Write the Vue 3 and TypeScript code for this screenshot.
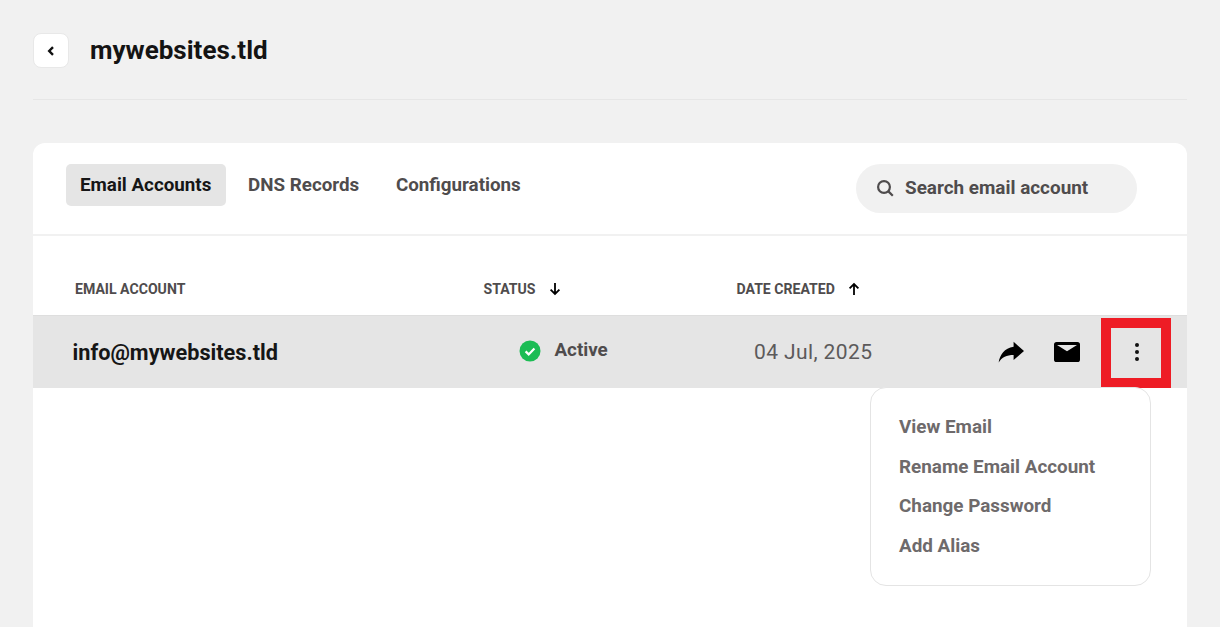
<script setup lang="ts">
const tabs = ["Email Accounts", "DNS Records", "Configurations"];
const menuItems = ["View Email", "Rename Email Account", "Change Password", "Add Alias"];
</script>

<template>
  <div class="page">
    <header class="head">
      <button class="back" type="button">
        <svg width="12" height="12" viewBox="0 0 12 12">
          <path d="M8 2.200 4.200 6 8 9.800" fill="none" stroke="#111" stroke-width="2.400" />
        </svg>
      </button>
      <h1 class="title">mywebsites.tld</h1>
    </header>

    <section class="card">
      <div class="toolbar">
        <nav class="tabs">
          <a
            v-for="(tab, index) of tabs"
            :key="tab"
            class="tab"
            :class="{ active: index === 0 }"
          >{{ tab }}</a>
        </nav>
        <div class="search">
          <svg width="18" height="18" viewBox="0 0 18 18">
            <circle cx="8" cy="8" r="5.900" fill="none" stroke="#4f4c4d" stroke-width="2.200" />
            <path d="M12.400 12.400 16.800 16.800" stroke="#4f4c4d" stroke-width="2.200" />
          </svg>
          <span>Search email account</span>
        </div>
      </div>

      <div class="table-head">
        <span class="th th-email">EMAIL ACCOUNT</span>
        <span class="th th-status">
          STATUS
          <svg width="14" height="14" viewBox="0 0 14 14">
            <path d="M7 1v11M2.600 7.600 7 12l4.400-4.400" fill="none" stroke="#000" stroke-width="1.800" />
          </svg>
        </span>
        <span class="th th-date">
          DATE CREATED
          <svg width="14" height="14" viewBox="0 0 14 14">
            <path d="M7 13V2M2.600 6.400 7 2l4.400 4.400" fill="none" stroke="#000" stroke-width="1.800" />
          </svg>
        </span>
      </div>

      <div class="row">
        <span class="email">info@mywebsites.tld</span>
        <span class="status">
          <svg width="22" height="22" viewBox="0 0 22 22">
            <circle cx="11" cy="11" r="10.500" fill="#1cbc54" />
            <path d="M6.600 11.400 9.700 14.400 15.400 8.400" fill="none" stroke="#fff" stroke-width="2.200" />
          </svg>
          <span class="status-text">Active</span>
        </span>
        <span class="date">04 Jul, 2025</span>
        <div class="actions">
          <svg class="forward" width="26" height="22" viewBox="0 0 24 20">
            <path d="M14.400 5.200V0.600L24 9l-9.600 8.400v-4.700C8 12.700 3.600 14.800 0.600 19.600 1.800 12.800 5.800 6.300 14.400 5.200z" fill="#000" />
          </svg>
          <svg class="mail" width="26" height="20" viewBox="0 0 26 20">
            <path d="M2.600 0h20.800A2.600 2.600 0 0 1 26 2.600v14.800a2.600 2.600 0 0 1-2.600 2.600H2.600A2.600 2.600 0 0 1 0 17.400V2.600A2.600 2.600 0 0 1 2.600 0zM3 3l10 6.300L23 3z" fill="#000" fill-rule="evenodd" />
          </svg>
          <span class="kebab"><i></i><i></i><i></i></span>
        </div>
        <div class="highlight"></div>
      </div>

      <ul class="menu">
        <li v-for="item of menuItems" :key="item">{{ item }}</li>
      </ul>
    </section>
  </div>
</template>

<style scoped>
.page {
  padding: 33px 33px 0;
  height: 627px;
  box-sizing: border-box;
  overflow: hidden;
  font-family: Roboto, "Liberation Sans", sans-serif;
}

.head {
  display: flex;
  align-items: flex-start;
  gap: 21px;
  height: 36px;
  padding-bottom: 30px;
  border-bottom: 1px solid #e6e6e6;
  margin-bottom: 43px;
}

.back {
  width: 36px;
  height: 35px;
  padding: 0;
  display: flex;
  align-items: center;
  justify-content: center;
  background: #fff;
  border: 1px solid #e8e8e8;
  border-radius: 8px;
}

.title {
  margin: 0;
  font-size: 26px;
  line-height: 35px;
  font-weight: 700;
  color: #141414;
}

.card {
  position: relative;
  background: #fff;
  border-radius: 12px 12px 0 0;
  height: 520px;
}

.toolbar {
  display: flex;
  justify-content: space-between;
  align-items: flex-start;
  height: 70px;
  padding: 21px 50px 0 33px;
  border-bottom: 2px solid #f1f1f1;
}

.tabs {
  display: flex;
  gap: 8.500px;
}

.tab {
  height: 42px;
  line-height: 42px;
  padding: 0 14.200px 0 14px;
  border-radius: 5px;
  font-size: 18.800px;
  font-weight: 700;
  color: #4f4c4d;
}

.tab.active {
  background: #e5e5e5;
  color: #161616;
}

.search {
  width: 281px;
  height: 49px;
  box-sizing: border-box;
  padding: 0 0 3px 20px;
  display: flex;
  align-items: center;
  gap: 11px;
  background: #f1f1f1;
  border-radius: 25px;
  font-size: 18.900px;
  font-weight: 700;
  color: #4f4c4d;
}

.search svg {
  margin-top: 1px;
}

.table-head {
  display: flex;
  align-items: center;
  height: 80px;
  box-sizing: border-box;
  padding-top: 27px;
  border-bottom: 1px solid #dedede;
}

.th {
  display: flex;
  align-items: center;
  gap: 12.500px;
  font-size: 14.100px;
  font-weight: 700;
  color: #4f4c4d;
}

.th-email {
  margin-left: 42px;
  width: 408.500px;
}

.th-status {
  width: 253px;
}

.row {
  position: relative;
  display: flex;
  align-items: center;
  height: 72px;
  background: #e5e5e5;
}

.email {
  margin-left: 39.500px;
  width: 446px;
  font-size: 21.700px;
  font-weight: 700;
  color: #161616;
}

.status {
  display: flex;
  align-items: center;
  gap: 14px;
  width: 235.500px;
  font-size: 18.800px;
  font-weight: 700;
  color: #4f4c4d;
}

.status svg {
  margin-top: -2px;
}

.status-text {
  margin-top: -5px;
}

.date {
  width: 245px;
  font-size: 21px;
  color: #5c5a5b;
  letter-spacing: 0.4px;
}

.actions {
  display: flex;
  align-items: center;
}

.forward {
  margin-left: -1px;
}

.mail {
  margin-left: 30px;
}

.kebab {
  margin-left: 55px;
  display: flex;
  flex-direction: column;
  gap: 3px;
}

.kebab i {
  width: 4px;
  height: 4px;
  border-radius: 50%;
  background: #111;
}

.highlight {
  position: absolute;
  left: 1068px;
  top: 2px;
  width: 50px;
  height: 50px;
  border: 10px solid #ee1c25;
}

.menu {
  position: absolute;
  left: 837px;
  top: 244px;
  width: 281px;
  height: 199px;
  box-sizing: border-box;
  margin: 0;
  padding: 20px 0 0 28px;
  list-style: none;
  background: #fff;
  border: 1px solid #e4e4e4;
  border-radius: 16px;
  font-size: 18.850px;
  font-weight: 700;
  color: #6e6a6b;
}

.menu li {
  height: 39.500px;
  line-height: 39.500px;
}
</style>

<style>
html,
body {
  margin: 0;
  background: #f1f1f1;
  overflow: hidden;
}
</style>
